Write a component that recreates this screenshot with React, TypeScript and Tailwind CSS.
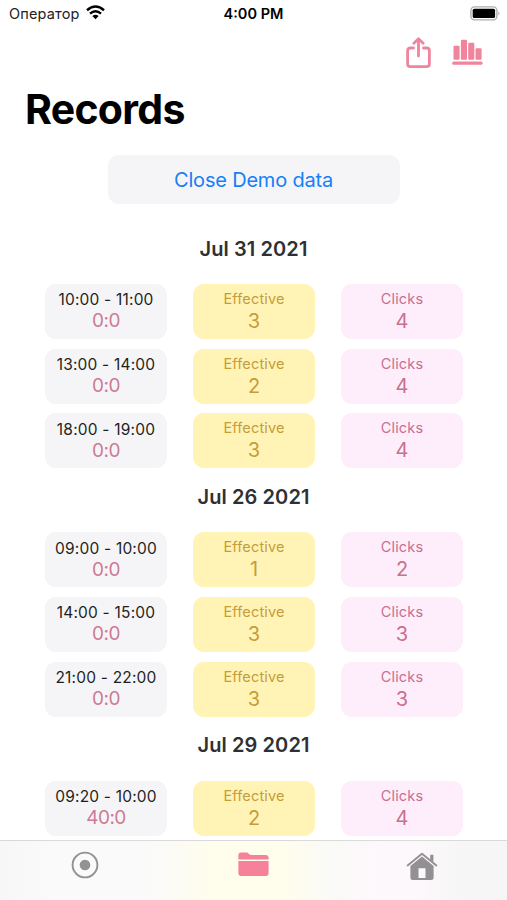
import React from "react";

type Entry = { time: string; score: string; effective: number; clicks: number };
type Day = { date: string; entries: Entry[] };

const days: Day[] = [
  {
    date: "Jul 31 2021",
    entries: [
      { time: "10:00 - 11:00", score: "0:0", effective: 3, clicks: 4 },
      { time: "13:00 - 14:00", score: "0:0", effective: 2, clicks: 4 },
      { time: "18:00 - 19:00", score: "0:0", effective: 3, clicks: 4 },
    ],
  },
  {
    date: "Jul 26 2021",
    entries: [
      { time: "09:00 - 10:00", score: "0:0", effective: 1, clicks: 2 },
      { time: "14:00 - 15:00", score: "0:0", effective: 3, clicks: 3 },
      { time: "21:00 - 22:00", score: "0:0", effective: 3, clicks: 3 },
    ],
  },
  {
    date: "Jul 29 2021",
    entries: [{ time: "09:20 - 10:00", score: "40:0", effective: 2, clicks: 4 }],
  },
];

function StatusBar() {
  return (
    <div className="grid h-7 shrink-0 grid-cols-3 items-center pl-[9px] pr-[9px] text-sm text-[#222]">
      <div className="flex items-center gap-[6px]">
        <span className="text-[14.5px] tracking-[0.15px]">Оператор</span>
        <svg width="19" height="15" viewBox="0 0 19 15" fill="none" stroke="#000" strokeWidth="2.5" className="-mt-[2px]">
          <path d="M1 5.2Q9.5-2.2 18 5.2" />
          <path d="M4 8.6Q9.5 3.8 15 8.6" />
          <path d="M9.5 14.2L6.4 11Q9.5 8.6 12.6 11Z" fill="#000" stroke="none" />
        </svg>
      </div>
      <div className="text-center text-[14.5px] font-semibold text-black">4:00 PM</div>
      <div className="-mr-[4px] flex justify-end">
        <svg width="32" height="15" viewBox="0 0 32 15" className="-mt-px">
          <rect x="0.9" y="0.9" width="26" height="13" rx="3.6" fill="#fff" stroke="#adadad" strokeWidth="1.4" />
          <rect x="2.7" y="2.7" width="22.4" height="9.4" rx="1.6" fill="#000" />
          <path d="M28.4 5.2Q30.6 7.4 28.4 9.7Z" fill="#adadad" />
        </svg>
      </div>
    </div>
  );
}

function ShareIcon() {
  return (
    <svg width="26" height="32" viewBox="0 0 26 32" fill="none" stroke="#f0849c" strokeWidth="2.8" strokeLinecap="round" strokeLinejoin="round">
      <path d="M7.5 11H4.5Q1.6 11 1.6 13.5V27Q1.6 29.6 4.5 29.6H20.5Q23.4 29.6 23.4 27V13.5Q23.4 11 20.5 11H17.5" />
      <path d="M12.5 19V2M7.9 6.2L12.5 1.8L17.1 6.2" />
    </svg>
  );
}

function ChartIcon() {
  return (
    <svg width="31" height="27" viewBox="0 0 31 27" fill="#f0849c">
      <rect x="1.5" y="6.8" width="6.1" height="14" rx="1.1" />
      <rect x="8.9" y="0.8" width="6.1" height="20" rx="1.1" />
      <rect x="16.2" y="3.8" width="6.1" height="17" rx="1.1" />
      <rect x="23.5" y="9.3" width="6.1" height="11.5" rx="1.1" />
      <rect x="0.2" y="22.6" width="30.4" height="3.2" rx="1.6" />
    </svg>
  );
}

function CountCard({ label, value, className }: { label: string; value: number; className: string }) {
  return (
    <div className={`flex h-[55px] flex-col items-center rounded-[11px] pt-[5px] ${className}`}>
      <span className="text-[14.5px] leading-5 tracking-[0.15px]">{label}</span>
      <span className="text-[20px] leading-6">{value}</span>
    </div>
  );
}

function Row({ entry }: { entry: Entry }) {
  return (
    <div className="grid grid-cols-[122px_122px_122px] gap-x-[26px] pb-[9.7px] pl-[45px]">
      <div className="flex h-[55px] flex-col items-center rounded-[11px] bg-[#f5f5f8] pt-[6.5px]">
        <span className="text-[15.5px] leading-5 tracking-[0.2px] whitespace-nowrap text-[#1f1f21]">{entry.time}</span>
        <span className="text-[19px] leading-[22px] tracking-[-0.5px] text-[#cd7b95]">{entry.score}</span>
      </div>
      <CountCard label="Effective" value={entry.effective} className="bg-[#fff4b5] text-[#c69c3b]" />
      <CountCard label="Clicks" value={entry.clicks} className="bg-[#feeefb] text-[#c96f8f]" />
    </div>
  );
}

function TabBar() {
  return (
    <nav className="grid h-[60px] shrink-0 grid-cols-3 border-t border-[#d9d9d9] bg-[linear-gradient(90deg,#f7f7f7_0%,#fafafa_10%,#fafafa_30%,#fffdec_42%,#fffdec_56%,#fafaf7_65%,#fdf8fc_75%,#fcf8fb_83%,#f6f6f6_92%)]">
      <div className="flex justify-center pt-[10px]">
        <svg width="28" height="28" viewBox="0 0 28 28">
          <circle cx="14" cy="14" r="12.4" fill="none" stroke="#929292" strokeWidth="1.9" />
          <circle cx="14" cy="14" r="5.3" fill="#929292" />
        </svg>
      </div>
      <div className="flex justify-center pt-[11px]">
        <svg width="31" height="25" viewBox="0 0 31 25" fill="#f5819b">
          <path d="M0.4 7.4V3.3Q0.4 0.6 3.2 0.6H8.4Q9.7 0.6 10.5 1.5L11.2 2.2Q12 2.9 13.2 2.9H27.5Q30.6 2.9 30.6 6V7.4Z" />
          <path d="M0.4 9H30.6V21Q30.6 24.1 27.5 24.1H3.5Q0.4 24.1 0.4 21Z" />
        </svg>
      </div>
      <div className="flex justify-center pt-[11px] pr-px">
        <svg width="32" height="29" viewBox="0 0 32 29" fill="#929092">
          <path d="M1.6 13.4L16 1.7L30.4 13.4" fill="none" stroke="#929092" strokeWidth="1.9" strokeLinecap="round" strokeLinejoin="round" />
          <path d="M24.2 2.8H27.4V10.2L24.2 7.6Z" />
          <path fillRule="evenodd" d="M16 4.6L27.6 14V25.5Q27.6 28 25.1 28H6.9Q4.4 28 4.4 25.5V14ZM12.5 16.2V26H19.5V16.2Z" />
        </svg>
      </div>
    </nav>
  );
}

export default function App() {
  return (
    <div className="flex h-[900px] w-[507px] flex-col overflow-hidden bg-white font-['Inter','Liberation_Sans',sans-serif]">
      <StatusBar />
      <div className="flex h-[50px] shrink-0 items-start justify-end gap-5 pt-[9px] pr-[24px]">
        <ShareIcon />
        <div className="pt-[2px]">
          <ChartIcon />
        </div>
      </div>
      <h1 className="h-[77px] shrink-0 pt-[7px] pl-[25px] text-[41px] leading-[48px] font-bold tracking-[-0.7px] text-black">Records</h1>
      <button className="mx-auto h-[49px] w-[292px] shrink-0 rounded-[11px] bg-[#f5f5f8] text-[20px] tracking-[-0.2px] text-[#1680f7]">
        Close Demo data
      </button>
      <main className="min-h-0 flex-1 overflow-hidden pt-[25.6px]">
        {days.map((day) => (
          <section key={day.date}>
            <h2 className="h-[54.3px] pt-[5px] text-center text-[20px] leading-7 font-semibold tracking-[0.1px] text-[#303032]">{day.date}</h2>
            {day.entries.map((entry) => (
              <Row key={entry.time} entry={entry} />
            ))}
          </section>
        ))}
      </main>
      <TabBar />
    </div>
  );
}
